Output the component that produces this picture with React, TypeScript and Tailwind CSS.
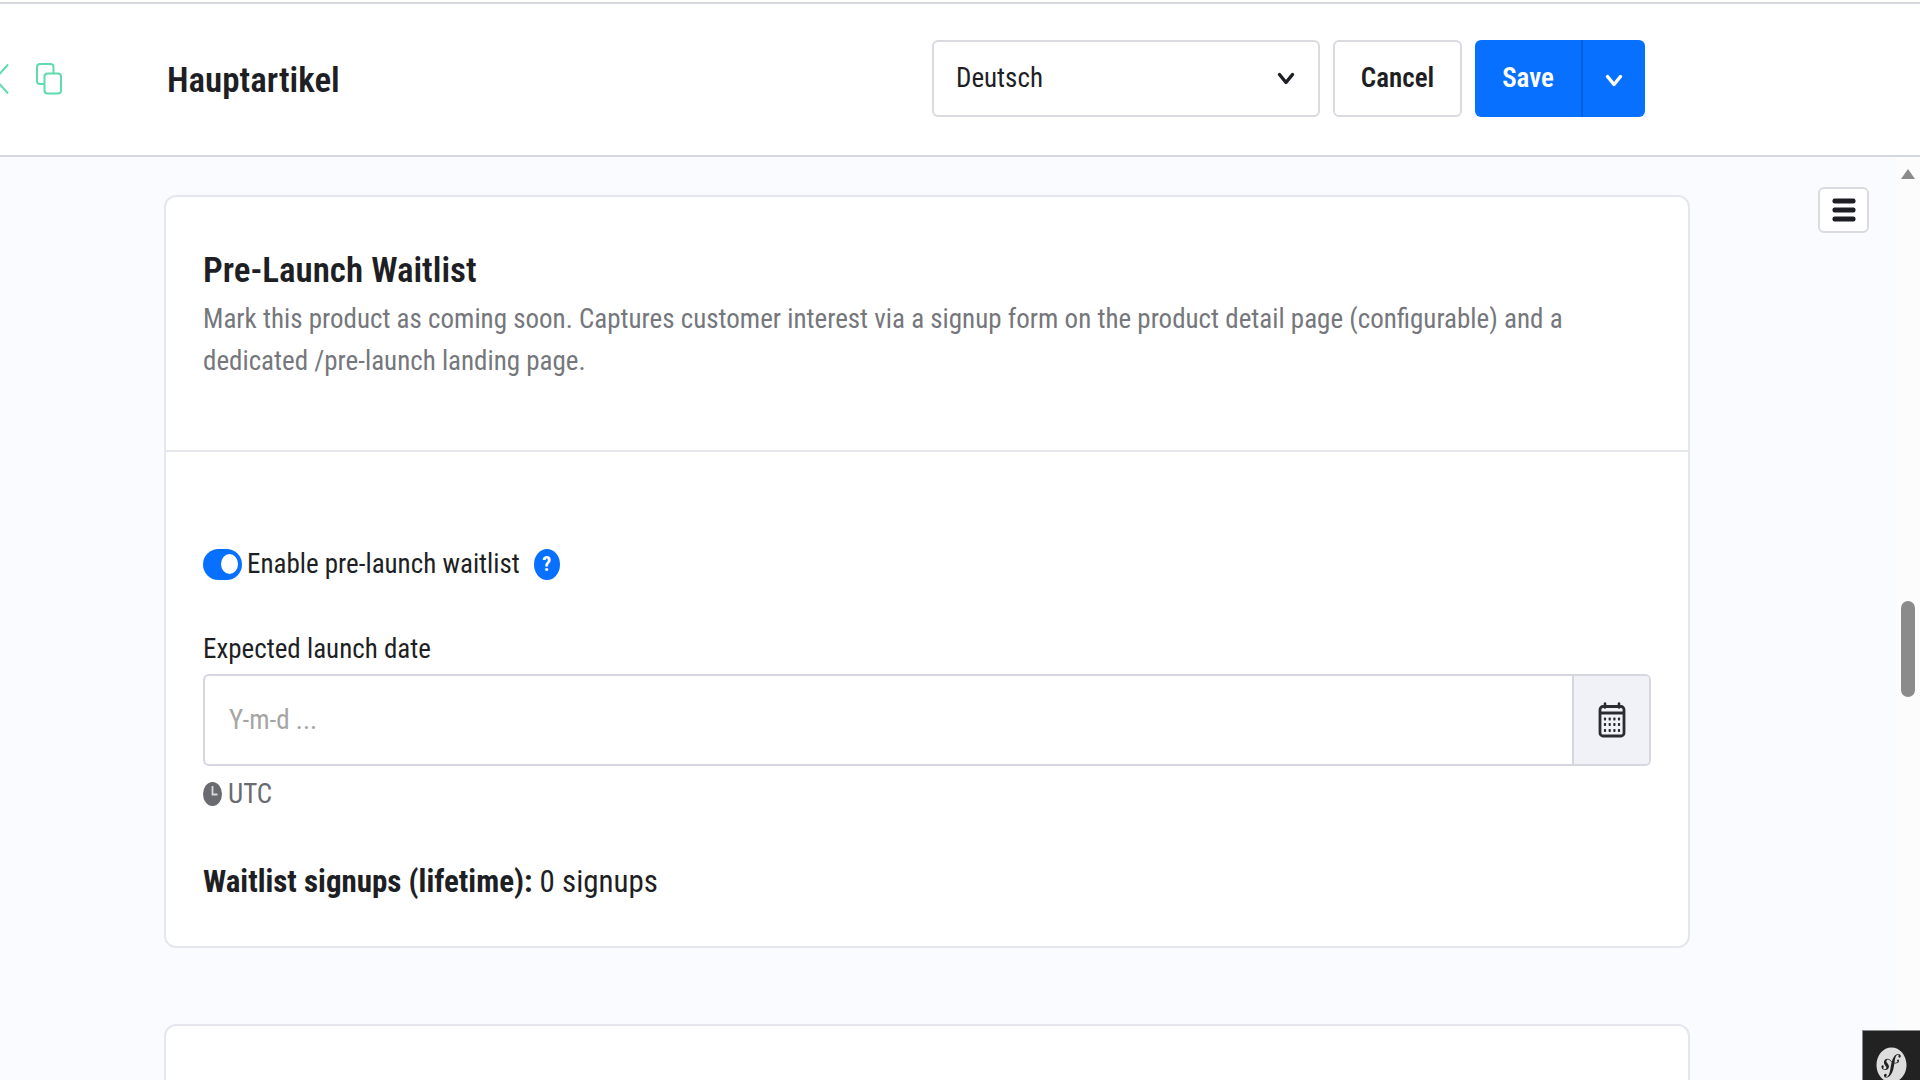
import React, { useState } from "react";
import { FaSymfony } from "react-icons/fa";

interface IconProps {
  className?: string;
}

const ChevronIcon: React.FC<IconProps> = ({ className }) => (
  <svg className={className} width="18" height="14" viewBox="0 0 18 14" fill="none" aria-hidden="true">
    <path d="M2.500 2.500 9 10.500 15.500 2.500" stroke="currentColor" strokeWidth="3.4" strokeLinecap="round" strokeLinejoin="round" />
  </svg>
);

const PreviousIcon: React.FC = () => (
  <svg width="10" height="32" viewBox="0 0 10 32" fill="none" aria-hidden="true">
    <path d="M8 1.5 -5 16 8 30.5" stroke="currentColor" strokeWidth="2" />
  </svg>
);

const CopyIcon: React.FC = () => (
  <svg width="26" height="32" viewBox="0 0 26 32" fill="none" stroke="currentColor" strokeWidth="2" aria-hidden="true">
    <path d="M8.5 21H4a3 3 0 0 1-3-3V4a3 3 0 0 1 3-3h10.5a3 3 0 0 1 3 3v6.5" />
    <rect x="8.5" y="10.5" width="16.5" height="20" rx="3" />
  </svg>
);

const CalendarIcon: React.FC = () => (
  <svg width="28" height="36" viewBox="0 0 28 36" fill="none" aria-hidden="true">
    <path d="M7 1.5v4M21 1.5v4" stroke="currentColor" strokeWidth="2.6" strokeLinecap="round" />
    <rect x="2" y="4.5" width="24" height="29.5" rx="3" stroke="currentColor" strokeWidth="2.8" />
    <path d="M2 11h24" stroke="currentColor" strokeWidth="2.8" />
    {[17, 22.5, 28.5].map((y) =>
      [7, 11.7, 16.4, 21].map((x) => (
        <rect key={`${x}-${y}`} x={x - 1.1} y={y - 1.4} width="2.2" height="2.8" rx="0.6" fill="currentColor" />
      ))
    )}
  </svg>
);

const ClockIcon: React.FC = () => (
  <svg width="19" height="24" viewBox="0 0 19 24" fill="none" aria-hidden="true">
    <ellipse cx="9.5" cy="12" rx="9.5" ry="12" fill="currentColor" />
    <path d="M9.5 4v8.5h5" stroke="#fff" strokeOpacity="0.75" strokeWidth="1.8" />
  </svg>
);

const MenuIcon: React.FC = () => (
  <svg width="24" height="24" viewBox="0 0 24 24" aria-hidden="true">
    {[0, 9, 18].map((y) => (
      <rect key={y} x="0.5" y={y + 0.5} width="23" height="5" rx="2" fill="currentColor" />
    ))}
  </svg>
);

const Header: React.FC = () => {
  const [locale, setLocale] = useState("de");

  return (
    <header className="mt-[2px] flex items-center border-y-2 border-[#d5d8dd] bg-white pt-[36px] pr-[275px] pb-[38px]">
      <nav className="flex w-[167px] shrink-0 items-center gap-[26px] text-[#5fdcab]" aria-label="Product">
        <a href="#previous" aria-label="Previous">
          <PreviousIcon />
        </a>
        <a href="#duplicate" aria-label="Duplicate">
          <CopyIcon />
        </a>
      </nav>
      <h1 className="pt-1 text-[35px] leading-[46px] font-semibold">Hauptartikel</h1>

      <div className="ml-auto flex gap-[13px]">
        <div className="relative w-[388px]">
          <select
            aria-label="Language"
            value={locale}
            onChange={(e) => setLocale(e.target.value)}
            className="h-[77px] w-full appearance-none rounded-md border-2 border-[#d9dbe1] bg-white pl-[22px] text-[27px]"
          >
            <option value="de">Deutsch</option>
            <option value="en">English</option>
          </select>
          <ChevronIcon className="pointer-events-none absolute top-[32px] right-[25px]" />
        </div>
        <button type="button" className="h-[77px] w-[129px] rounded-md border-2 border-[#d9dbe1] bg-white text-[27px] font-semibold">
          Cancel
        </button>
        <div className="flex text-white">
          <button type="button" className="h-[77px] w-[108px] rounded-l-md border-r-2 border-[#0560dd] bg-[#0870ff] text-[27px] font-semibold">
            Save
          </button>
          <button
            type="button"
            aria-label="More save options"
            className="flex h-[77px] w-[62px] items-center justify-center rounded-r-md bg-[#0870ff] pt-1"
          >
            <ChevronIcon />
          </button>
        </div>
      </div>
    </header>
  );
};

const WaitlistCard: React.FC = () => {
  const [enabled, setEnabled] = useState(true);
  const [launchDate, setLaunchDate] = useState("");

  return (
    <section className="rounded-xl border-2 border-[#e6e7ee] bg-white">
      {/* Title */}
      <div className="border-b-2 border-[#e6e7ee] px-[37px] pt-[51px] pb-[68px]">
        <h2 className="text-[35px] leading-[46px] font-semibold">Pre-Launch Waitlist</h2>
        <p className="mt-1 text-[27px] leading-[42px] text-[#75777c]">
          Mark this product as coming soon. Captures customer interest via a signup form on the product detail page
          (configurable) and a dedicated /pre-launch landing page.
        </p>
      </div>

      {/* Settings */}
      <div className="px-[37px] pt-24 pb-11">
        <div className="flex items-center">
          <label className="flex items-center gap-[5px] text-[27px] leading-8">
            <input
              type="checkbox"
              checked={enabled}
              onChange={(e) => setEnabled(e.target.checked)}
              className="peer sr-only"
            />
            <span className="flex h-[31px] w-[39px] items-center rounded-full bg-[#c3c6cd] px-[4px] peer-checked:justify-end peer-checked:bg-[#0870ff]">
              <span className="h-[20px] w-[17px] rounded-[50%] bg-white" />
            </span>
            Enable pre-launch waitlist
          </label>
          <button
            type="button"
            aria-label="Help"
            className="ml-[14px] flex h-[31px] w-[26px] items-center justify-center rounded-[50%] bg-[#0870ff] text-[20px] leading-none font-bold text-white"
          >
            ?
          </button>
        </div>

        <label htmlFor="launch-date" className="mt-12 block text-[27px] leading-[42px]">
          Expected launch date
        </label>
        <div className="mt-1 flex h-[92px] overflow-hidden rounded-md border-2 border-[#d5d6df]">
          <input
            id="launch-date"
            type="text"
            placeholder="Y-m-d ..."
            value={launchDate}
            onChange={(e) => setLaunchDate(e.target.value)}
            className="min-w-0 flex-1 px-6 text-[27px] outline-none placeholder:text-[#a5a5a5]"
          />
          <button
            type="button"
            aria-label="Open calendar"
            className="flex w-[77px] items-center justify-center border-l-2 border-[#d5d6df] bg-[#f0f2f8] text-[#2b2c31]"
          >
            <CalendarIcon />
          </button>
        </div>

        <p className="mt-2 flex items-center gap-[6px] text-[27px] leading-10 text-[#696b70]">
          <ClockIcon />
          UTC
        </p>
        <p className="mt-12 text-[31px] leading-10">
          <strong className="font-bold">Waitlist signups (lifetime):</strong> 0 signups
        </p>
      </div>
    </section>
  );
};

const Scrollbar: React.FC = () => (
  <div className="flex w-[24px] shrink-0 flex-col items-center bg-[#fcfcfc] pt-[12px]" aria-hidden="true">
    <svg width="14" height="10" viewBox="0 0 14 10">
      <path d="M7 0 14 10H0z" fill="#8b8b8b" />
    </svg>
    <div className="mt-[422px] h-[96px] w-[14px] rounded-full bg-[#8b8b8b]" />
  </div>
);

const App: React.FC = () => {
  return (
    <div className="relative flex h-screen flex-col overflow-hidden bg-white font-['Roboto_Condensed','Roboto',sans-serif] text-[#1e1f24]">
      <Header />

      <div className="flex min-h-0 flex-1 bg-[#fafbff]">
        <main className="min-w-0 flex-1 overflow-hidden pt-[38px] pl-[164px]">
          <WaitlistCard />
          <section className="mt-[76px] h-[400px] rounded-xl border-2 border-[#e6e7ee] bg-white" />
        </main>
        <aside className="flex w-[206px] shrink-0 items-start justify-end pt-[30px] pr-[27px]">
          <button
            type="button"
            aria-label="Menu"
            className="flex h-[46px] w-[51px] items-center justify-center rounded-md border-2 border-[#d9dbe1] bg-white"
          >
            <MenuIcon />
          </button>
        </aside>
        <Scrollbar />
      </div>

      {/* Debug toolbar toggle */}
      <button
        type="button"
        aria-label="Symfony toolbar"
        className="absolute right-0 bottom-0 flex h-[50px] w-[58px] justify-center overflow-hidden border-t border-l border-[#888] bg-[#222] pt-[16px] text-[#ddd]"
      >
        <FaSymfony className="h-[36px] w-[31px] shrink-0" preserveAspectRatio="none" />
      </button>
    </div>
  );
};

export default App;
